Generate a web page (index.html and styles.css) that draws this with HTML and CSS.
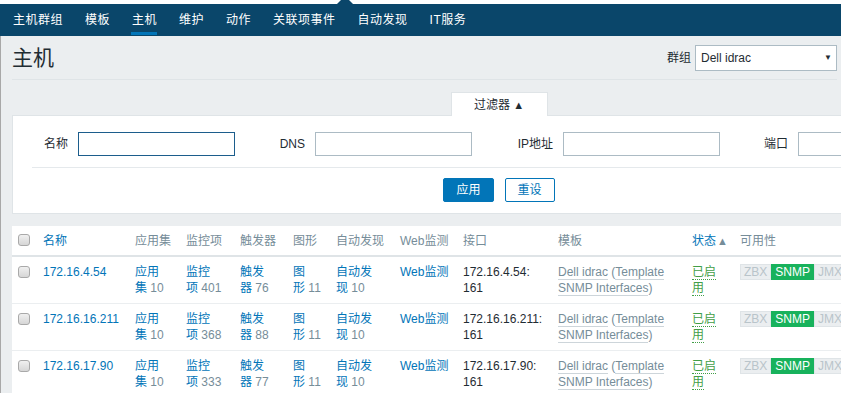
FILE: index.html
```
<!DOCTYPE html>
<html lang="zh-CN">
<head>
    <meta charset="UTF-8">
    <title>主机</title>
    <link rel="stylesheet" href="styles.css">
</head>
<body>
    <div class="top-strip"></div>
    <nav class="subnav">
        <a href="#">主机群组</a>
        <a href="#">模板</a>
        <a href="#" class="active">主机</a>
        <a href="#">维护</a>
        <a href="#">动作</a>
        <a href="#">关联项事件</a>
        <a href="#">自动发现</a>
        <a href="#">IT服务</a>
    </nav>

    <div class="page">
        <header class="page-head">
            <h1>主机</h1>
            <div class="group-select">
                <label>群组</label>
                <div class="select">Dell idrac<span class="caret">▼</span></div>
            </div>
        </header>

        <!-- Filter -->
        <div class="filter">
            <div class="filter-tab">过滤器 <span class="tri">▲</span></div>
            <div class="filter-body">
                <div class="fields">
                    <label>名称</label><input type="text" class="focused">
                    <label>DNS</label><input type="text">
                    <label>IP地址</label><input type="text">
                    <label>端口</label><input type="text">
                </div>
                <div class="buttons">
                    <button class="btn-apply">应用</button>
                    <button class="btn-reset">重设</button>
                </div>
            </div>
        </div>

        <!-- Hosts -->
        <table class="hosts">
            <colgroup>
                <col style="width: 26px">
                <col style="width: 92px">
                <col style="width: 51px">
                <col style="width: 54px">
                <col style="width: 53px">
                <col style="width: 43px">
                <col style="width: 64px">
                <col style="width: 63px">
                <col style="width: 95px">
                <col style="width: 134px">
                <col style="width: 48px">
                <col>
            </colgroup>
            <thead>
                <tr>
                    <th class="cb"><input type="checkbox"></th>
                    <th><a href="#">名称</a></th>
                    <th>应用集</th>
                    <th>监控项</th>
                    <th>触发器</th>
                    <th>图形</th>
                    <th>自动发现</th>
                    <th>Web监测</th>
                    <th>接口</th>
                    <th>模板</th>
                    <th class="status-col"><a href="#">状态</a><span class="sort">▲</span></th>
                    <th>可用性</th>
                </tr>
            </thead>
            <tbody>
                <tr>
                    <td class="cb"><input type="checkbox"></td>
                    <td><a href="#">172.16.4.54</a></td>
                    <td><a href="#">应用集</a>&nbsp;<span class="count">10</span></td>
                    <td><a href="#">监控项</a>&nbsp;<span class="count">401</span></td>
                    <td><a href="#">触发器</a>&nbsp;<span class="count">76</span></td>
                    <td><a href="#">图形</a>&nbsp;<span class="count">11</span></td>
                    <td><a href="#">自动发现</a>&nbsp;<span class="count">10</span></td>
                    <td><a href="#">Web监测</a></td>
                    <td class="iface">172.16.4.54: 161</td>
                    <td class="tpl"><span class="alt">Dell idrac</span> (<span class="alt">Template SNMP Interfaces</span>)</td>
                    <td class="status-col"><span class="enabled">已启用</span></td>
                    <td><span class="avail"><span class="off">ZBX</span><span class="on">SNMP</span><span class="off">JMX</span></span></td>
                </tr>
                <tr>
                    <td class="cb"><input type="checkbox"></td>
                    <td><a href="#">172.16.16.211</a></td>
                    <td><a href="#">应用集</a>&nbsp;<span class="count">10</span></td>
                    <td><a href="#">监控项</a>&nbsp;<span class="count">368</span></td>
                    <td><a href="#">触发器</a>&nbsp;<span class="count">88</span></td>
                    <td><a href="#">图形</a>&nbsp;<span class="count">11</span></td>
                    <td><a href="#">自动发现</a>&nbsp;<span class="count">10</span></td>
                    <td><a href="#">Web监测</a></td>
                    <td class="iface">172.16.16.211: 161</td>
                    <td class="tpl"><span class="alt">Dell idrac</span> (<span class="alt">Template SNMP Interfaces</span>)</td>
                    <td class="status-col"><span class="enabled">已启用</span></td>
                    <td><span class="avail"><span class="off">ZBX</span><span class="on">SNMP</span><span class="off">JMX</span></span></td>
                </tr>
                <tr>
                    <td class="cb"><input type="checkbox"></td>
                    <td><a href="#">172.16.17.90</a></td>
                    <td><a href="#">应用集</a>&nbsp;<span class="count">10</span></td>
                    <td><a href="#">监控项</a>&nbsp;<span class="count">333</span></td>
                    <td><a href="#">触发器</a>&nbsp;<span class="count">77</span></td>
                    <td><a href="#">图形</a>&nbsp;<span class="count">11</span></td>
                    <td><a href="#">自动发现</a>&nbsp;<span class="count">10</span></td>
                    <td><a href="#">Web监测</a></td>
                    <td class="iface">172.16.17.90: 161</td>
                    <td class="tpl"><span class="alt">Dell idrac</span> (<span class="alt">Template SNMP Interfaces</span>)</td>
                    <td class="status-col"><span class="enabled">已启用</span></td>
                    <td><span class="avail"><span class="off">ZBX</span><span class="on">SNMP</span><span class="off">JMX</span></span></td>
                </tr>
            </tbody>
        </table>
    </div>
</body>
</html>
```

FILE: styles.css
```
body { margin: 0; font-family: "Liberation Sans", "Noto Sans CJK SC", sans-serif; font-size: 12px; line-height: 16px; color: #1f2c33; background: #ebeef0; overflow: hidden; }
a { color: #0275b8; text-decoration: none; }

.top-strip { height: 4px; background: #fff; position: relative; }
.top-strip::after { content: ""; position: absolute; left: 337px; top: -4px; border-left: 8px solid transparent; border-right: 8px solid transparent; border-bottom: 8px solid #0a466a; }

.subnav { display: flex; height: 32px; padding-left: 2px; background: #0a466a; }
.subnav a { position: relative; padding: 0 11px; line-height: 32px; color: #fff; letter-spacing: 0.5px; }
.subnav a.active::after { content: ""; position: absolute; left: 10px; right: 11px; bottom: 1px; height: 3px; background: #0275b8; }

.page { min-height: 400px; box-shadow: inset 1px 0 #a8a8a8; padding-left: 12px; }

.page-head { display: flex; align-items: center; justify-content: space-between; height: 43px; margin-right: 4px; border-bottom: 1px solid #dfe4e7; }
.page-head h1 { margin: 0; font-size: 21px; font-weight: normal; line-height: 24px; }
.group-select { display: flex; align-items: center; gap: 4px; }
.select { display: flex; justify-content: space-between; align-items: center; width: 131px; height: 24px; padding: 0 4px 0 5px; border: 1px solid #acbbc4; background: #fff; }
.caret { font-size: 8px; }

.filter { width: 974px; margin-top: 12px; }
.filter-tab { width: 95px; height: 23px; margin: 0 auto -1px; border: 1px solid #dfe4e7; border-bottom: none; background: #fff; text-align: center; line-height: 24px; position: relative; }
.filter-tab .tri { font-size: 11px; }
.filter-body { background: #fff; border: 1px solid #dfe4e7; padding: 16px 0 11px 19px; }
.fields { display: grid; grid-template-columns: 36px 157px 60px 157px 71px 157px 58px 157px; column-gap: 10px; align-items: center; padding-bottom: 11px; margin-right: 20px; border-bottom: 1px solid #e5e9ec; }
.fields label { text-align: right; }
.fields input { box-sizing: border-box; width: 157px; height: 24px; margin: 0; border: 1px solid #acbbc4; }
.fields input.focused { border-color: #1c5d8c; }
.buttons { display: flex; justify-content: center; gap: 11px; padding: 10px 19px 0 0; }
.buttons button { height: 24px; padding: 0 12px; border: 1px solid #0275b8; border-radius: 2px; font: inherit; cursor: pointer; }
.btn-apply { background: #0275b8; color: #fff; }
.btn-reset { background: #fff; color: #0275b8; }

.hosts { width: 974px; margin-top: 12px; background: #fff; border-collapse: separate; border-spacing: 0; table-layout: fixed; }
.hosts th, .hosts td { padding: 7px 5px; text-align: left; vertical-align: top; }
.hosts th { padding: 7px 5px 6px; font-weight: normal; color: #768d99; white-space: nowrap; border-bottom: 2px solid #dfe4e7; }
.hosts td { border-bottom: 1px solid #ebeef0; }
.hosts .cb { padding-left: 6px; }
.hosts td.cb { padding-top: 8px; }
.hosts input[type=checkbox] { appearance: none; display: block; width: 12px; height: 12px; margin: 1px 0 0; border: 1px solid #a9a9a9; border-radius: 3px; background: linear-gradient(#f0f0f0, #d6d6d6); }
.hosts .status-col { padding-right: 9px; }
.sort { font-size: 11px; line-height: 12px; color: #768d99; margin-left: 1px; }
.count { color: #768d99; }
.iface { color: #1f2c33; }
.tpl { color: #768d99; }
.alt { border-bottom: 1px solid #cdd5da; }
.enabled { color: #429e47; border-bottom: 1px dotted #429e47; }
.avail { display: flex; }
.avail span { padding: 0 3px; line-height: 14px; border: 1px solid #dfe4e7; }
.avail .off { color: #b9c4ca; background: #ebeef0; }
.avail .on { color: #fff; background: #18b25c; border-color: #18b25c; }
```
